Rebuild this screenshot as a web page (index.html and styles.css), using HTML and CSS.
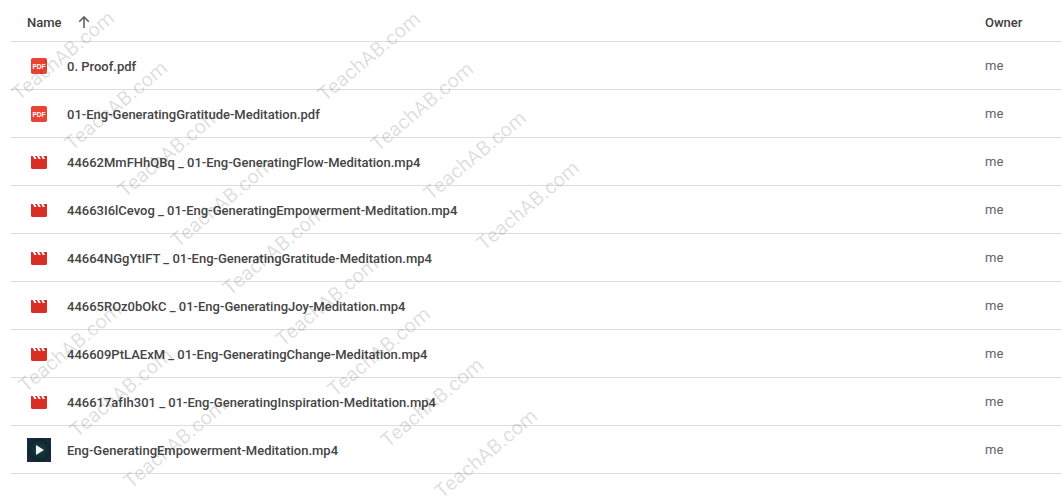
FILE: index.html
```html
<!DOCTYPE html>
<html lang="en">
<head>
<meta charset="utf-8">
<title>Files</title>
<link rel="stylesheet" href="styles.css">
</head>
<body>
<svg class="defs" width="0" height="0" aria-hidden="true">
  <symbol id="video" viewBox="0 0 16 14"><path fill="#d93025" d="M0 1h1.800l1.600 3h2.200L4 1h2l1.600 3h2.200L8.200 1h2l1.600 3H14L12.400 1H16v11.800c0 .7-.5 1.200-1.200 1.200H1.200C.5 14 0 13.500 0 12.800z"/></symbol>
</svg>
<main class="list">
  <div class="head">
    <div class="name-col">
      <span class="head-name">Name</span>
      <svg class="arrow" viewBox="0 0 14 14"><path d="M7 13V2M2.200 6.800 7 2l4.800 4.800" fill="none" stroke="#5f6368" stroke-width="1.600"/></svg>
    </div>
    <div class="owner-col head-owner">Owner</div>
  </div>
  <div class="row"><div class="icon-cell"><svg class="ico-pdf" viewBox="0 0 16 16"><rect width="16" height="16" rx="1.800" fill="#ea4335"/><text x="8" y="10.500" text-anchor="middle" class="pdf-label">PDF</text></svg></div><div class="file">0. Proof.pdf</div><div class="owner-col me">me</div></div>
  <div class="row"><div class="icon-cell"><svg class="ico-pdf" viewBox="0 0 16 16"><rect width="16" height="16" rx="1.800" fill="#ea4335"/><text x="8" y="10.500" text-anchor="middle" class="pdf-label">PDF</text></svg></div><div class="file">01-Eng-GeneratingGratitude-Meditation.pdf</div><div class="owner-col me">me</div></div>
  <div class="row"><div class="icon-cell"><svg class="ico-video"><use href="#video"/></svg></div><div class="file">44662MmFHhQBq _ 01-Eng-GeneratingFlow-Meditation.mp4</div><div class="owner-col me">me</div></div>
  <div class="row"><div class="icon-cell"><svg class="ico-video"><use href="#video"/></svg></div><div class="file">44663I6lCevog _ 01-Eng-GeneratingEmpowerment-Meditation.mp4</div><div class="owner-col me">me</div></div>
  <div class="row"><div class="icon-cell"><svg class="ico-video"><use href="#video"/></svg></div><div class="file">44664NGgYtIFT _ 01-Eng-GeneratingGratitude-Meditation.mp4</div><div class="owner-col me">me</div></div>
  <div class="row"><div class="icon-cell"><svg class="ico-video"><use href="#video"/></svg></div><div class="file">44665ROz0bOkC _ 01-Eng-GeneratingJoy-Meditation.mp4</div><div class="owner-col me">me</div></div>
  <div class="row"><div class="icon-cell"><svg class="ico-video"><use href="#video"/></svg></div><div class="file">446609PtLAExM _ 01-Eng-GeneratingChange-Meditation.mp4</div><div class="owner-col me">me</div></div>
  <div class="row"><div class="icon-cell"><svg class="ico-video"><use href="#video"/></svg></div><div class="file">446617afIh301 _ 01-Eng-GeneratingInspiration-Meditation.mp4</div><div class="owner-col me">me</div></div>
  <div class="row"><div class="icon-cell"><svg class="ico-thumb" viewBox="0 0 24 24"><defs><radialGradient id="glow"><stop offset="0" stop-color="#17403f"/><stop offset=".8" stop-color="#102a30"/><stop offset="1" stop-color="#0f2430"/></radialGradient></defs><rect width="24" height="24" fill="#182840"/><circle cx="12" cy="12" r="11.500" fill="url(#glow)"/><path d="M9 7l8 5-8 5z" fill="#f4f6f6"/></svg></div><div class="file">Eng-GeneratingEmpowerment-Meditation.mp4</div><div class="owner-col me">me</div></div>
</main>
<div class="wm wm1">TeachAB.com</div>
<div class="wm wm2">TeachAB.com</div>
<div class="wm wm3">TeachAB.com</div>
<div class="wm wm4">TeachAB.com</div>
<div class="wm wm5">TeachAB.com</div>
<div class="wm wm6">TeachAB.com</div>
<div class="wm wm7">TeachAB.com</div>
<div class="wm wm8">TeachAB.com</div>
<div class="wm wm9">TeachAB.com</div>
<div class="wm wm10">TeachAB.com</div>
<div class="wm wm11">TeachAB.com</div>
<div class="wm wm12">TeachAB.com</div>
<div class="wm wm13">TeachAB.com</div>
<div class="wm wm14">TeachAB.com</div>
<div class="wm wm15">TeachAB.com</div>
<div class="wm wm16">TeachAB.com</div>
</body>
</html>
```
FILE: styles.css
```css
* { box-sizing: border-box; }
html, body { margin: 0; padding: 0; background: #fff; }
body {
  position: relative;
  width: 1062px;
  height: 501px;
  overflow: hidden;
  font-family: Roboto, "Liberation Sans", sans-serif;
}
.defs { position: absolute; }
.list { margin-left: 11px; }
.head, .row {
  display: flex;
  align-items: center;
  border-bottom: 1px solid #dadce0;
}
.head { height: 42px; padding-top: 3px; }
.row { height: 48px; }
.name-col {
  flex: 1;
  display: flex;
  align-items: center;
  padding-left: 16px;
}
.head-name { font-size: 13px; font-weight: 500; color: #3c4043; }
.arrow { width: 14px; height: 14px; margin-left: 15px; }
.owner-col { width: 77px; flex: none; }
.head-owner { font-size: 13px; font-weight: 500; color: #3c4043; }
.icon-cell {
  width: 56px;
  flex: none;
  display: flex;
  justify-content: center;
}
.ico-pdf { width: 16px; height: 16px; }
.ico-video { width: 16px; height: 14px; margin-top: 1px; }
.ico-thumb { width: 24px; height: 24px; }
.pdf-label {
  font: 700 6.500px "Liberation Sans", sans-serif;
  fill: #fff;
}
.file {
  flex: 1;
  padding-top: 2px;
  font-size: 13px;
  font-weight: 500;
  color: #444;
  white-space: nowrap;
}
.me { font-size: 13px; color: #5f6368; }
.wm {
  position: absolute;
  width: 124px;
  text-align: center;
  font-family: Roboto, sans-serif;
  font-size: 20px;
  line-height: 16px;
  letter-spacing: .2px;
  color: rgba(0, 0, 0, .14);
  transform: rotate(-40deg);
  pointer-events: none;
  white-space: nowrap;
}
.wm1 { left: 0; top: 48px; }
.wm2 { left: 53px; top: 98px; }
.wm3 { left: 106px; top: 145px; }
.wm4 { left: 159px; top: 195px; }
.wm5 { left: 211px; top: 243px; }
.wm6 { left: 264px; top: 294px; }
.wm7 { left: 306px; top: 49px; }
.wm8 { left: 359px; top: 99px; }
.wm9 { left: 412px; top: 148px; }
.wm10 { left: 465px; top: 198px; }
.wm11 { left: 7px; top: 340px; }
.wm12 { left: 58px; top: 385px; }
.wm13 { left: 112px; top: 436px; }
.wm14 { left: 316px; top: 344px; }
.wm15 { left: 369px; top: 395px; }
.wm16 { left: 423px; top: 446px; }
```
